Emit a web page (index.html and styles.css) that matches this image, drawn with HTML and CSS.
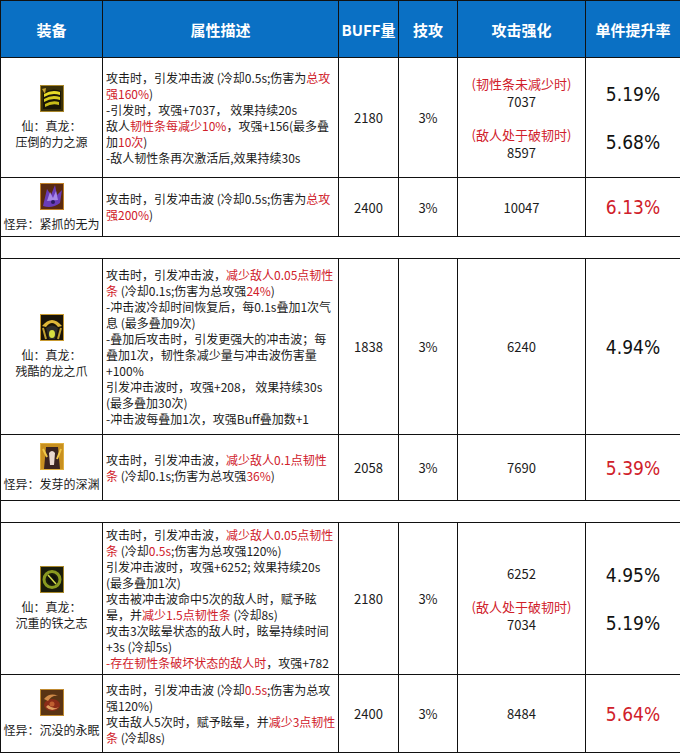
FILE: index.html
```html
<!DOCTYPE html>
<html lang="zh-CN">
<head>
<meta charset="utf-8">
<title>装备对比</title>
<link rel="stylesheet" href="styles.css">
</head>
<body>
<table class="sheet">
  <colgroup>
    <col class="c-equip"><col class="c-desc"><col class="c-buff"><col class="c-skill"><col class="c-atk"><col class="c-rate">
  </colgroup>
  <thead>
    <tr class="head">
      <th>装备</th><th>属性描述</th><th>BUFF量</th><th>技攻</th><th>攻击强化</th><th>单件提升率</th>
    </tr>
  </thead>
  <tbody>
    <tr class="r1">
      <td class="equip">
        <svg class="icon" viewBox="0 0 24 27" width="24" height="27">
          <rect x="0.5" y="0.5" width="23" height="26" fill="#3a3008" stroke="#a8862a"/>
          <path d="M3 8 Q12 2 21 6 L21 24 L3 24Z" fill="#1a1606"/>
          <path d="M4 9 Q12 4 20 7 L20 10 Q12 7 4 12Z" fill="#e8dc28"/>
          <path d="M4 14 Q12 9 20 12 L20 15 Q12 12 4 17Z" fill="#d8cc20"/>
          <path d="M5 19 Q12 15 19 17 L19 20 Q12 18 5 22Z" fill="#c8bc18"/>
          <path d="M2 4 L6 3 L5 9Z" fill="#c8a430"/>
        </svg>
        <div class="name">仙：真龙：<br>压倒的力之源</div>
      </td>
      <td class="desc">攻击时，引发冲击波 (冷却0.5s;伤害为<span class="red">总攻</span><br><span class="red">强160%</span>)<br>-引发时，攻强+7037， 效果持续20s<br>敌人<span class="red">韧性条每减少10%</span>，攻强+156(最多叠<br>加<span class="red">10次</span>)<br>-敌人韧性条再次激活后,效果持续30s</td>
      <td class="num">2180</td>
      <td class="num">3%</td>
      <td class="num"><div class="stack"><div class="pair"><div class="red">(韧性条未减少时)</div><div>7037</div></div><div class="pair"><div class="red">(敌人处于破韧时)</div><div>8597</div></div></div></td>
      <td class="rate"><div class="stack rates"><div>5.19%</div><div>5.68%</div></div></td>
    </tr>
    <tr class="r2">
      <td class="equip">
        <svg class="icon" viewBox="0 0 24 27" width="24" height="27">
          <rect x="0.5" y="0.5" width="23" height="26" fill="#5a2a10" stroke="#c08028"/>
          <path d="M3 23 L7 6 L11 12 L15 2 L17 12 L22 7 L20 20 Q12 26 3 23Z" fill="#6a3cb8"/>
          <path d="M7 18 L10 9 L13 15 L16 8 L18 17Z" fill="#a88ae8"/>
          <circle cx="13" cy="19" r="2" fill="#2a1a60"/>
        </svg>
        <div class="name">怪异：紧抓的无为</div>
      </td>
      <td class="desc">攻击时，引发冲击波 (冷却0.5s;伤害为<span class="red">总攻</span><br><span class="red">强200%</span>)</td>
      <td class="num">2400</td>
      <td class="num">3%</td>
      <td class="num">10047</td>
      <td class="rate red">6.13%</td>
    </tr>
    <tr class="gap"><td colspan="6"></td></tr>
    <tr class="r3">
      <td class="equip">
        <svg class="icon" viewBox="0 0 24 27" width="24" height="27">
          <rect x="0.5" y="0.5" width="23" height="26" fill="#1a1408" stroke="#c89a30"/>
          <path d="M2 12 Q12 0 22 12 L18 13 Q12 5 6 13Z" fill="#e0b838"/>
          <path d="M6 14 L9 25 L15 25 L18 14 Q12 9 6 14Z" fill="#2e2e2a"/>
          <ellipse cx="12" cy="20" rx="3" ry="4" fill="#d8e040"/>
          <path d="M3 14 L6 25 M21 14 L18 25" stroke="#c0a030" stroke-width="2"/>
        </svg>
        <div class="name">仙：真龙：<br>残酷的龙之爪</div>
      </td>
      <td class="desc">攻击时，引发冲击波，<span class="red">减少敌人0.05点韧性</span><br><span class="red">条</span> (冷却0.1s;伤害为总攻强<span class="red">24%</span>)<br>-冲击波冷却时间恢复后，每0.1s叠加1次气<br>息 (最多叠加9次)<br>-叠加后攻击时，引发更强大的冲击波；每<br>叠加1次，韧性条减少量与冲击波伤害量<br>+100%<br>引发冲击波时，攻强+208， 效果持续30s<br>(最多叠加30次)<br>-冲击波每叠加1次，攻强Buff叠加数+1</td>
      <td class="num">1838</td>
      <td class="num">3%</td>
      <td class="num">6240</td>
      <td class="rate">4.94%</td>
    </tr>
    <tr class="r4">
      <td class="equip">
        <svg class="icon" viewBox="0 0 24 27" width="24" height="27">
          <rect x="0.5" y="0.5" width="23" height="26" fill="#c89020" stroke="#e0b040"/>
          <path d="M6 4 L18 4 L20 26 L4 26Z" fill="#3a2420"/>
          <path d="M9 10 Q12 6 15 10 L14 22 L10 22Z" fill="#e8d8d0"/>
          <path d="M3 6 L7 14 M21 6 L17 16" stroke="#f0c848" stroke-width="2"/>
        </svg>
        <div class="name">怪异：发芽的深渊</div>
      </td>
      <td class="desc">攻击时，引发冲击波，<span class="red">减少敌人0.1点韧性</span><br><span class="red">条</span> (冷却0.1s;伤害为总攻强<span class="red">36%</span>)</td>
      <td class="num">2058</td>
      <td class="num">3%</td>
      <td class="num">7690</td>
      <td class="rate red">5.39%</td>
    </tr>
    <tr class="gap"><td colspan="6"></td></tr>
    <tr class="r5">
      <td class="equip">
        <svg class="icon" viewBox="0 0 24 27" width="24" height="27">
          <rect x="0.5" y="0.5" width="23" height="26" fill="#1a1c0a" stroke="#a8882a"/>
          <circle cx="12" cy="13.5" r="8" fill="none" stroke="#8a9a20" stroke-width="3"/>
          <circle cx="12" cy="13.5" r="4.5" fill="#101208"/>
          <path d="M8 9 L16 18" stroke="#d8e050" stroke-width="1.5"/>
        </svg>
        <div class="name">仙：真龙：<br>沉重的铁之志</div>
      </td>
      <td class="desc">攻击时，引发冲击波，<span class="red">减少敌人0.05点韧性</span><br><span class="red">条</span> (冷却<span class="red">0.5s</span>;伤害为总攻强120%)<br>引发冲击波时，攻强+6252; 效果持续20s<br>(最多叠加1次)<br>攻击被冲击波命中5次的敌人时，赋予眩<br>晕，并<span class="red">减少1.5点韧性条</span> (冷却8s)<br>攻击3次眩晕状态的敌人时，眩晕持续时间<br>+3s (冷却5s)<br><span class="red">-存在韧性条破坏状态的敌人时</span>，攻强+782</td>
      <td class="num">2180</td>
      <td class="num">3%</td>
      <td class="num"><div class="stack"><div>6252</div><div class="pair"><div class="red">(敌人处于破韧时)</div><div>7034</div></div></div></td>
      <td class="rate"><div class="stack rates"><div>4.95%</div><div>5.19%</div></div></td>
    </tr>
    <tr class="r6">
      <td class="equip">
        <svg class="icon" viewBox="0 0 24 27" width="24" height="27">
          <rect x="0.5" y="0.5" width="23" height="26" fill="#5a3414" stroke="#c08a30"/>
          <ellipse cx="12" cy="16" rx="8" ry="6" fill="#8a2c18"/>
          <path d="M4 10 Q10 3 18 7 Q12 6 8 12Z" fill="#d08a48"/>
          <path d="M6 18 Q12 24 19 18 Q14 21 8 16Z" fill="#e0a060"/>
          <circle cx="12" cy="15" r="2.5" fill="#c06030"/>
        </svg>
        <div class="name">怪异：沉没的永眠</div>
      </td>
      <td class="desc">攻击时，引发冲击波 (冷却<span class="red">0.5s</span>;伤害为总攻<br>强120%)<br>攻击敌人5次时，赋予眩晕，并<span class="red">减少3点韧性</span><br><span class="red">条</span> (冷却8s)</td>
      <td class="num">2400</td>
      <td class="num">3%</td>
      <td class="num">8484</td>
      <td class="rate red">5.64%</td>
    </tr>
  </tbody>
</table>
</body>
</html>
```

FILE: styles.css
```css
* { box-sizing: border-box; }
html, body { margin: 0; padding: 0; background: #ffffff; }
body {
  font-family: "Noto Sans CJK SC", "Noto Sans", sans-serif;
  color: #1b1b1b;
}
.sheet {
  width: 680px;
  border-collapse: collapse;
  table-layout: fixed;
}
.c-equip { width: 102px; }
.c-desc { width: 236px; }
.c-buff { width: 60px; }
.c-skill { width: 59px; }
.c-atk { width: 128px; }
.c-rate { width: 95px; }

.sheet th, .sheet td {
  border: 1px solid #111;
  padding: 0;
  vertical-align: middle;
}
.head th {
  height: 57px;
  background: #0a70c4;
  color: #ffffff;
  font-size: 15px;
  font-weight: 700;
  text-align: center;
}
.r1 td { height: 120px; }
.r2 td { height: 59px; }
.gap td { height: 22px; }
.r3 td { height: 176px; }
.r4 td { height: 66px; }
.r5 td { height: 152px; }
.r6 td { height: 78px; }

.equip { text-align: center; }
.icon { display: block; margin: 0 auto 6px; }
.name { font-size: 12px; line-height: 16px; white-space: nowrap; }

.desc {
  font-size: 12px;
  line-height: 16px;
  white-space: nowrap;
  padding-left: 3px !important;
  text-align: left;
}
.num {
  font-size: 13px;
  line-height: 17px;
  text-align: center;
}
.red { color: #d0202a; }

.stack {
  display: flex;
  flex-direction: column;
  align-items: center;
  gap: 16px;
}
.pair {
  display: flex;
  flex-direction: column;
  align-items: center;
  gap: 1px;
}
.pair > div { line-height: 17px; height: 17px; }
.rate {
  text-align: center;
  font-family: "DejaVu Sans Condensed", "DejaVu Sans", sans-serif;
  font-stretch: condensed;
  font-size: 19px;
  line-height: 24px;
  color: #111;
}
.rate.red { color: #d0202a; }
.rates { gap: 24px; }
```
